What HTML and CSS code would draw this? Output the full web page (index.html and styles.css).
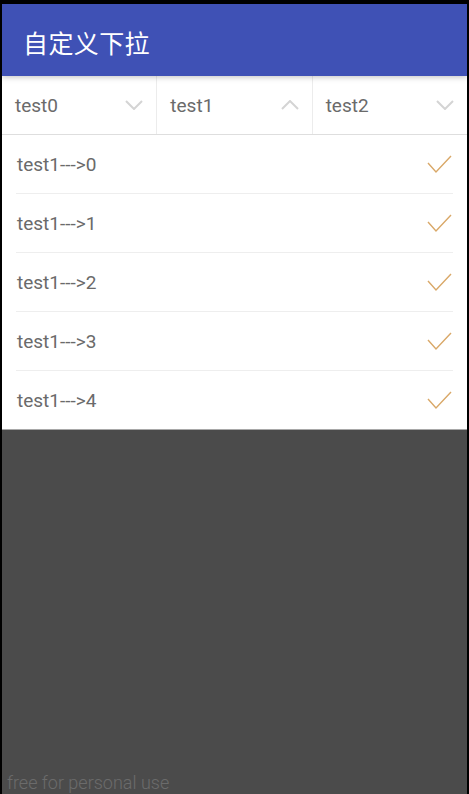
FILE: index.html
```html
<!DOCTYPE html>
<html>
<head>
<meta charset="utf-8">
<link rel="stylesheet" href="styles.css">
</head>
<body>
<div class="frame">
  <div class="screen">
    <header class="appbar"><span class="title">自定义下拉</span></header>
    <div class="tabs">
      <div class="tab"><span>test0</span>
        <svg class="chev" width="18" height="10" viewBox="0 0 18 10"><polyline points="1,1 9,9 17,1" fill="none" stroke="#d4d4d4" stroke-width="2"/></svg>
      </div>
      <div class="tab"><span>test1</span>
        <svg class="chev up" width="18" height="10" viewBox="0 0 18 10"><polyline points="1,9 9,1 17,9" fill="none" stroke="#d4d4d4" stroke-width="2"/></svg>
      </div>
      <div class="tab"><span>test2</span>
        <svg class="chev" width="18" height="10" viewBox="0 0 18 10"><polyline points="1,1 9,9 17,1" fill="none" stroke="#d4d4d4" stroke-width="2"/></svg>
      </div>
    </div>
    <ul class="list">
      <li class="row"><span>test1---&gt;0</span><svg class="check" width="25" height="19" viewBox="0 0 25 19"><polyline points="1,8 9,17 24,1" fill="none" stroke="#d9a868" stroke-width="1.4"/></svg></li>
      <li class="row"><span>test1---&gt;1</span><svg class="check" width="25" height="19" viewBox="0 0 25 19"><polyline points="1,8 9,17 24,1" fill="none" stroke="#d9a868" stroke-width="1.4"/></svg></li>
      <li class="row"><span>test1---&gt;2</span><svg class="check" width="25" height="19" viewBox="0 0 25 19"><polyline points="1,8 9,17 24,1" fill="none" stroke="#d9a868" stroke-width="1.4"/></svg></li>
      <li class="row"><span>test1---&gt;3</span><svg class="check" width="25" height="19" viewBox="0 0 25 19"><polyline points="1,8 9,17 24,1" fill="none" stroke="#d9a868" stroke-width="1.4"/></svg></li>
      <li class="row last"><span>test1---&gt;4</span><svg class="check" width="25" height="19" viewBox="0 0 25 19"><polyline points="1,8 9,17 24,1" fill="none" stroke="#d9a868" stroke-width="1.4"/></svg></li>
    </ul>
    <div class="overlay">
      <span class="watermark">free for personal use</span>
    </div>
  </div>
</div>
</body>
</html>
```

FILE: styles.css
```css
html, body {
  margin: 0;
  padding: 0;
  background: #000;
}
.frame {
  width: 469px;
  height: 794px;
  box-sizing: border-box;
  padding: 4px 2px 0 2px;
  background: #000;
}
.screen {
  height: 790px;
  display: flex;
  flex-direction: column;
  background: #fff;
  font-family: Roboto, "Noto Sans", sans-serif;
  position: relative;
}
.appbar {
  height: 72px;
  flex: none;
  background: #3f51b5;
  display: flex;
  align-items: center;
  padding-left: 21px;
  position: relative;
  z-index: 2;
  box-shadow: 0 1px 6px rgba(0,0,0,0.25);
}
.title {
  color: #fff;
  font-family: "Noto Sans CJK SC", sans-serif;
  font-size: 25px;
  letter-spacing: 0.4px;
  padding-top: 3px;
}
.tabs {
  height: 58px;
  flex: none;
  display: flex;
  border-bottom: 1px solid #dedede;
  background: #fff;
}
.tab {
  flex: 1;
  display: flex;
  align-items: center;
  justify-content: space-between;
  padding: 0 13px 0 13px;
  border-right: 1px solid #ececec;
  color: #6a6a6a;
  font-size: 19px;
}
.tab:last-child {
  border-right: none;
}
.tab span {
  margin-top: 1px;
}
.chev {
  display: block;
}
.list {
  list-style: none;
  margin: 0;
  padding: 0;
  flex: none;
  border-bottom: 1px solid #a8a8a8;
}
.row {
  height: 58px;
  margin: 0 14px;
  border-bottom: 1px solid #eeeeee;
  display: flex;
  align-items: center;
  justify-content: space-between;
  padding-left: 1px;
  color: #6a6a6a;
  font-size: 19px;
}
.row.last {
  border-bottom: none;
}
.row span {
  margin-top: 1px;
}
.check {
  display: block;
  margin-right: 1px;
  margin-top: 1px;
}
.overlay {
  flex: 1;
  background: #4b4b4b;
  display: flex;
  align-items: flex-end;
}
.watermark {
  color: #6b6b6b;
  font-family: Roboto, sans-serif;
  font-weight: 300;
  font-size: 18px;
  padding-left: 5px;
  line-height: 22px;
}
```
